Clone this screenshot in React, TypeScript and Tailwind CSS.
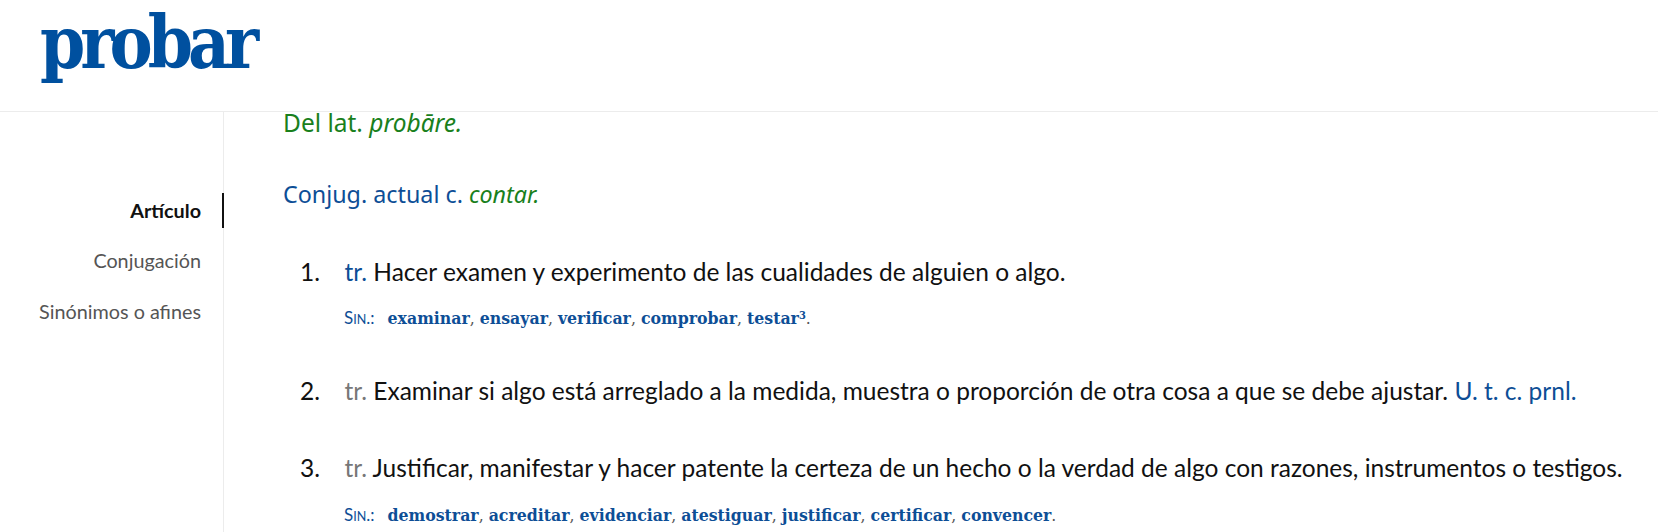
import React from 'react';

const blue = 'text-[#0d4e96]';

const Sin = ({ words, top }: { words: string[]; top: string }) => (
  <div className={`${top} pl-[44px] font-['Lato',sans-serif] text-[17px] leading-[20px]`}>
    <span className={blue}>
      S<span className="text-[12.5px]">IN</span>.:
    </span>
    <span className="ml-[13px] font-['DejaVu_Serif_Condensed','DejaVu_Serif',serif] text-[17.5px]">
      {words.map((w, i) => (
        <React.Fragment key={w}>
          <span className={`${blue} font-bold`}>
            {w === 'testar' ? (
              <>
                testar<sup className="text-[11px] -top-[0.45em]">3</sup>
              </>
            ) : (
              w
            )}
          </span>
          <span className="text-[#555]">{i < words.length - 1 ? ', ' : '.'}</span>
        </React.Fragment>
      ))}
    </span>
  </div>
);

const Acepcion = ({
  n,
  abbrBlue,
  children,
  top,
}: {
  n: number;
  abbrBlue?: boolean;
  children: React.ReactNode;
  top: string;
}) => (
  <div className={`${top} flex text-[24.5px] leading-[30px] text-[#111]`}>
    <span className="w-[44.5px] shrink-0">{n}.</span>
    <span>
      <span className={abbrBlue ? blue : 'text-[#777]'}>tr.</span> {children}
    </span>
  </div>
);

export default function App() {
  return (
    <div className="w-[1658px] h-[532px] overflow-hidden bg-white font-['Lato',sans-serif]">
      <header className="h-[112px] border-b border-[#ececec] pl-[40px]">
        <h1 className="font-['DejaVu_Serif_Condensed','DejaVu_Serif',serif] font-bold text-[72px] leading-[86px] tracking-[-5px] text-[#00509f]">
          probar
        </h1>
      </header>
      <div className="flex">
        <nav className="w-[224px] shrink-0 border-r border-[#ececec] h-[420px] pt-[81px] text-[19.8px]">
          <div className="flex justify-end items-center h-[35px] -mr-[1px] border-r-2 border-[#111] pr-[21px]">
            <span className="font-bold text-[#111]">Artículo</span>
          </div>
          <div className="mt-[15px] h-[35px] flex items-center justify-end pr-[22px] text-[#555]">Conjugación</div>
          <div className="mt-[16px] h-[35px] flex items-center justify-end pr-[22px] text-[#555]">Sinónimos o afines</div>
        </nav>
        <main className="flex-1 pl-[59px]">
          <p className="font-['Noto_Sans',sans-serif] text-[24.5px] leading-[32px] -mt-[5px] text-[#19801c]">
            Del lat. <em>probāre.</em>
          </p>
          <p className="font-['Noto_Sans',sans-serif] text-[23.3px] leading-[32px] mt-[39px] text-[#0d4e96]">
            Conjug. actual c. <em className="text-[#19801c]">contar.</em>
          </p>
          <div className="pl-[17px]">
            <Acepcion n={1} abbrBlue top="mt-[47px]">
              Hacer examen y experimento de las cualidades de alguien o algo.
            </Acepcion>
            <Sin top="mt-[21px]" words={['examinar', 'ensayar', 'verificar', 'comprobar', 'testar']} />
            <Acepcion n={2} top="mt-[46px]">
              Examinar si algo está arreglado a la medida, muestra o proporción de otra cosa a que se debe ajustar.{' '}
              <span className={blue}>U. t. c. prnl.</span>
            </Acepcion>
            <Acepcion n={3} top="mt-[47px]">
              Justificar, manifestar y hacer patente la certeza de un hecho o la verdad de algo con razones, instrumentos o testigos.
            </Acepcion>
            <Sin
              top="mt-[22px]"
              words={['demostrar', 'acreditar', 'evidenciar', 'atestiguar', 'justificar', 'certificar', 'convencer']}
            />
          </div>
        </main>
      </div>
    </div>
  );
}
